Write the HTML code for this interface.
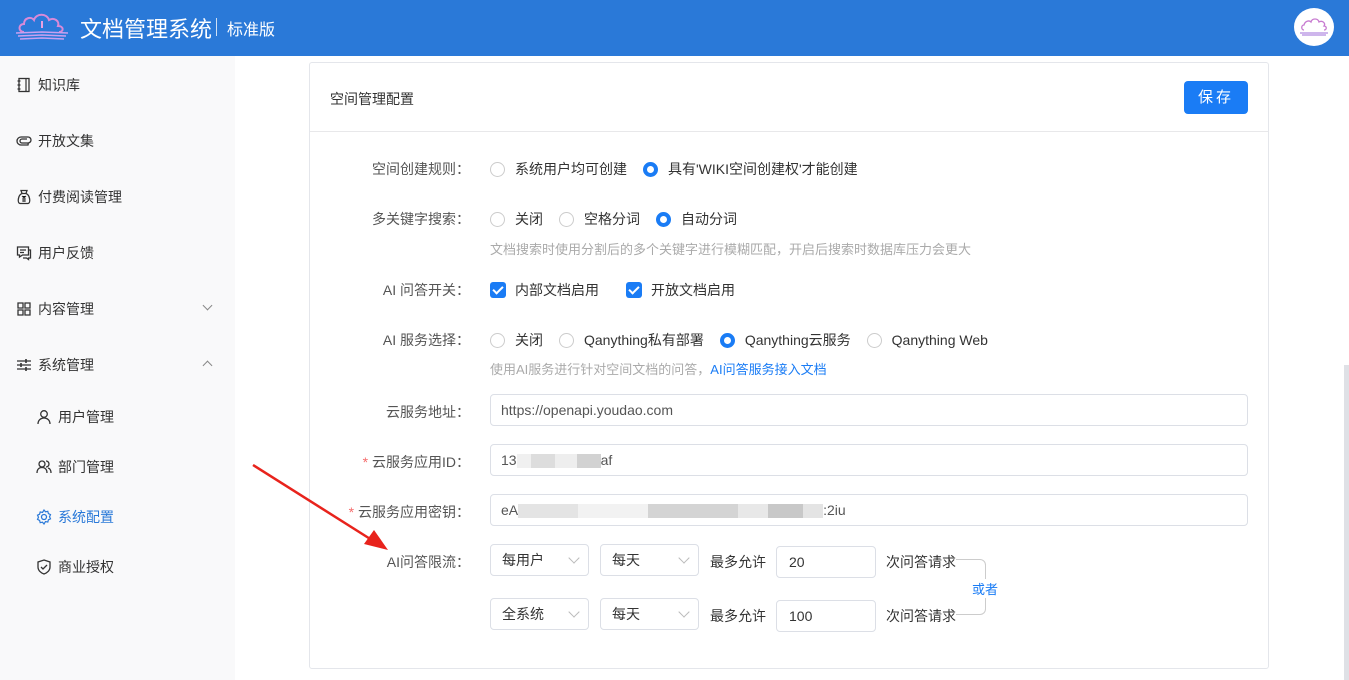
<!DOCTYPE html>
<html><head><meta charset="utf-8"><style>
*{box-sizing:border-box;margin:0;padding:0}
body{width:1349px;height:680px;overflow:hidden;font-family:"Liberation Sans","Noto Sans CJK SC",sans-serif;font-size:14px;color:#333;background:#fff;position:relative}
.hd{position:absolute;left:0;top:0;width:1349px;height:56px;background:#2a79d8;color:#fff}
.sb{position:absolute;left:0;top:56px;width:235px;height:624px;background:#f9f9fa}
.mi{position:absolute;left:16px;font-size:14px;color:#333;display:flex;align-items:center;gap:6px}
.mi svg{width:16px;height:16px;flex:none}
.card{position:absolute;left:309px;top:62px;width:960px;height:607px;border:1px solid #e4e6eb;border-radius:3px}
.lb{position:absolute;right:879px;font-size:14px;color:#555;white-space:nowrap}
.ctl{position:absolute;left:490px;display:flex;align-items:center;white-space:nowrap;color:#333}
.r{width:15px;height:15px;border:1px solid #ccc;border-radius:50%;display:inline-block;margin-right:10px}
.r.on{border:4px solid #1a7cf5}
.cb{width:16px;height:16px;background:#1a7cf5;border-radius:3px;display:inline-block;margin-right:9px;position:relative}
.cb:after{content:"";position:absolute;left:5px;top:2px;width:4px;height:8px;border:solid #fff;border-width:0 2px 2px 0;transform:rotate(45deg)}
.inp{position:absolute;left:490px;width:758px;height:32px;border:1px solid #dcdfe6;border-radius:4px;padding-left:10px;line-height:30px;color:#555}
.sel{position:absolute;height:32px;border:1px solid #dcdfe6;border-radius:4px;padding-left:11px;line-height:30px;color:#333}
.sel.dd:after{content:"";position:absolute;right:10px;top:9px;width:7px;height:7px;border:solid #bbb;border-width:0 1px 1px 0;transform:rotate(45deg)}
.blur{display:inline-block;height:14px;background:#ddd;vertical-align:middle}
</style></head><body>
<div class="hd">
<svg style="position:absolute;left:14px;top:10px" width="56" height="34" viewBox="0 0 56 34"><path d="M10 22 C4 22 4 14 10 14 C10 8 17 6 20 10 C22 3 33 3 35 10 C40 7 46 11 44 16 C50 16 50 22 45 22" fill="none" stroke="#d88ad8" stroke-width="2"/><line x1="28" y1="11" x2="28" y2="18" stroke="#e8a0e0" stroke-width="2"/><path d="M4 26 L28 25 L52 26 M6 29 L28 28 L50 29 M2 23 L28 22 L54 23" stroke="#c8a0f0" stroke-width="1.5" fill="none"/></svg>
<div style="position:absolute;left:80px;top:12px;font-size:22px">文档管理系统</div>
<div style="position:absolute;left:216px;top:18px;width:1px;height:18px;background:#cfe0f5"></div>
<div style="position:absolute;left:227px;top:16px;font-size:16px">标准版</div>
<div style="position:absolute;left:1294px;top:8px;width:40px;height:38px;border-radius:50%;background:#fff"><svg width="40" height="38" viewBox="0 0 40 38"><path d="M10 22 C7 22 7 17 10 17 C11 13 15 12 17 14 C18 10 24 10 25 14 C28 12 32 15 30 18 C33 18 33 22 30 22" fill="none" stroke="#c77ad0" stroke-width="1.3"/><path d="M6 25 H34 M8 27 H32" stroke="#b08be0" stroke-width="1.2"/></svg></div>
</div>
<div class="sb">
<div class="mi" style="top:19px"><svg viewBox="0 0 16 16"><rect x="3" y="1.5" width="10" height="13" fill="none" stroke="#333" stroke-width="1.3"/><path d="M1.5 4h3M1.5 8h3M1.5 12h3M10 1.5v13" stroke="#333" stroke-width="1.2"/></svg>知识库</div>
<div class="mi" style="top:75px"><svg viewBox="0 0 16 16"><path d="M5 4h7a3 3 0 010 6H6a2 2 0 010-4h5M5 12h7a3 3 0 000-2M5 4a4 4 0 000 8" fill="none" stroke="#333" stroke-width="1.3"/></svg>开放文集</div>
<div class="mi" style="top:131px"><svg viewBox="0 0 16 16"><path d="M5 1.5h6l-1 3h-4zM6 4.5C2 6 1 14 4 14.5h8C15 14 14 6 10 4.5" fill="none" stroke="#333" stroke-width="1.3"/><path d="M6 7l2 2 2-2M8 9v4M6 10h4M6 12h4" stroke="#333" stroke-width="1"/></svg>付费阅读管理</div>
<div class="mi" style="top:187px"><svg viewBox="0 0 16 16"><path d="M1.5 2h11v8h-6l-3 2v-2h-2z M13 5h1.5v8h-2v1.5l-2-1.5H7" fill="none" stroke="#333" stroke-width="1.3"/><path d="M4 5h6M4 7.5h4" stroke="#333" stroke-width="1.2"/></svg>用户反馈</div>
<div class="mi" style="top:243px"><svg viewBox="0 0 16 16"><path d="M2 2h5v5H2zM9 2h5v5H9zM2 9h5v5H2zM9 9h5v5H9z" fill="none" stroke="#333" stroke-width="1.3"/></svg>内容管理</div>
<div class="mi" style="top:299px"><svg viewBox="0 0 16 16"><path d="M1 4h14M1 8h14M1 12h14" stroke="#333" stroke-width="1.3"/><path d="M10 2v4M5 6v4M10 10v4" stroke="#333" stroke-width="1.6"/></svg>系统管理</div>
<div style="position:absolute;left:204px;top:246px;width:7px;height:7px;border:solid #888;border-width:0 1px 1px 0;transform:rotate(45deg)"></div>
<div style="position:absolute;left:204px;top:306px;width:7px;height:7px;border:solid #888;border-width:1px 0 0 1px;transform:rotate(45deg)"></div>
<div class="mi" style="left:36px;top:351px"><svg viewBox="0 0 16 16"><circle cx="8" cy="5" r="3.3" fill="none" stroke="#333" stroke-width="1.3"/><path d="M2 15c0-4 3-6 6-6s6 2 6 6" fill="none" stroke="#333" stroke-width="1.3"/></svg>用户管理</div>
<div class="mi" style="left:36px;top:401px"><svg viewBox="0 0 16 16"><circle cx="6" cy="5" r="3" fill="none" stroke="#333" stroke-width="1.3"/><path d="M1 14c0-3.5 2-5.5 5-5.5s5 2 5 5.5M10 2a3 3 0 010 6M12 9c2 .5 3 2.5 3 5" fill="none" stroke="#333" stroke-width="1.3"/></svg>部门管理</div>
<div class="mi" style="left:36px;top:451px;color:#2a79d8"><svg viewBox="0 0 16 16"><circle cx="8" cy="8" r="2.5" fill="none" stroke="#2a79d8" stroke-width="1.3"/><path d="M8 1l1.5 1.8 2.3-.5.6 2.3 2.1 1-1 2.1 1 2.1-2.1 1-.6 2.3-2.3-.5L8 15l-1.5-1.8-2.3.5-.6-2.3-2.1-1 1-2.1-1-2.1 2.1-1 .6-2.3 2.3.5z" fill="none" stroke="#2a79d8" stroke-width="1.2"/></svg>系统配置</div>
<div class="mi" style="left:36px;top:501px"><svg viewBox="0 0 16 16"><path d="M8 1l6 2v5c0 3.5-3 6-6 7-3-1-6-3.5-6-7V3z" fill="none" stroke="#333" stroke-width="1.3"/><path d="M5 8l2 2 4-4" fill="none" stroke="#333" stroke-width="1.3"/></svg>商业授权</div>
</div>
<div style="position:absolute;left:1344px;top:365px;width:5px;height:315px;background:#dfe1e6"></div>
<div class="card">
<div style="position:absolute;left:20px;top:26px;font-size:14px">空间管理配置</div>
<div style="position:absolute;left:874px;top:18px;width:64px;height:33px;background:#1a7cf5;border-radius:4px;color:#fff;font-size:15px;text-align:center;line-height:33px;letter-spacing:3px">保存</div>
<div style="position:absolute;left:0;top:68px;width:958px;height:1px;background:#e8e8ea"></div>
</div>
<div class="lb" style="top:159px">空间创建规则：</div>
<div class="ctl" style="top:159px"><span class="r"></span>系统用户均可创建<span class="r on" style="margin-left:16px"></span>具有'WIKI空间创建权'才能创建</div>
<div class="lb" style="top:209px">多关键字搜索：</div>
<div class="ctl" style="top:209px"><span class="r"></span>关闭<span class="r" style="margin-left:16px"></span>空格分词<span class="r on" style="margin-left:16px"></span>自动分词</div>
<div class="ctl" style="top:239px;font-size:13px;color:#aaa">文档搜索时使用分割后的多个关键字进行模糊匹配，开启后搜索时数据库压力会更大</div>
<div class="lb" style="top:280px">AI 问答开关：</div>
<div class="ctl" style="top:280px"><span class="cb"></span>内部文档启用<span class="cb" style="margin-left:27px"></span>开放文档启用</div>
<div class="lb" style="top:330px">AI 服务选择：</div>
<div class="ctl" style="top:330px"><span class="r"></span>关闭<span class="r" style="margin-left:16px"></span>Qanything私有部署<span class="r on" style="margin-left:16px"></span>Qanything云服务<span class="r" style="margin-left:16px"></span>Qanything Web</div>
<div class="ctl" style="top:359px;font-size:13px;color:#aaa">使用AI服务进行针对空间文档的问答，<span style="color:#1a7cf5">AI问答服务接入文档</span></div>
<div class="lb" style="top:402px">云服务地址：</div>
<div class="inp" style="top:394px">https://openapi.youdao.com</div>
<div class="lb" style="top:452px"><span style="color:#f56c6c">* </span>云服务应用ID：</div>
<div class="inp" style="top:444px">13<span class="blur" style="width:14px;background:#f0f0f0"></span><span class="blur" style="width:24px;background:#ddd"></span><span class="blur" style="width:22px;background:#eee"></span><span class="blur" style="width:24px;background:#d2d2d2"></span>af</div>
<div class="lb" style="top:502px"><span style="color:#f56c6c">* </span>云服务应用密钥：</div>
<div class="inp" style="top:494px">eA<span class="blur" style="width:60px;background:#e4e4e4"></span><span class="blur" style="width:70px;background:#f2f2f2"></span><span class="blur" style="width:90px;background:#d4d4d4"></span><span class="blur" style="width:30px;background:#e8e8e8"></span><span class="blur" style="width:35px;background:#c8c8c8"></span><span class="blur" style="width:20px;background:#e4e4e4"></span>:2iu</div>
<div class="lb" style="top:552px">AI问答限流：</div>
<div class="sel dd" style="left:490px;top:544px;width:99px">每用户</div>
<div class="sel dd" style="left:600px;top:544px;width:99px">每天</div>
<div class="ctl" style="left:710px;top:552px">最多允许</div>
<div class="sel" style="left:776px;top:546px;width:100px;padding-left:12px">20</div>
<div class="ctl" style="left:886px;top:552px">次问答请求</div>
<div class="sel dd" style="left:490px;top:598px;width:99px">全系统</div>
<div class="sel dd" style="left:600px;top:598px;width:99px">每天</div>
<div class="ctl" style="left:710px;top:606px">最多允许</div>
<div class="sel" style="left:776px;top:600px;width:100px;padding-left:12px">100</div>
<div class="ctl" style="left:886px;top:606px">次问答请求</div>
<div style="position:absolute;left:956px;top:559px;width:30px;height:56px;border:1px solid #ccc;border-left:none;border-radius:0 6px 6px 0"></div>
<div style="position:absolute;left:972px;top:579px;background:#fff;color:#1a7cf5;font-size:13px">或者</div>
<svg style="position:absolute;left:0;top:0" width="1349" height="680"><line x1="253" y1="465" x2="375" y2="542" stroke="#e8231c" stroke-width="2.5"/><polygon points="388,550 364,544 374,530" fill="#e8231c"/></svg>
</body></html>
